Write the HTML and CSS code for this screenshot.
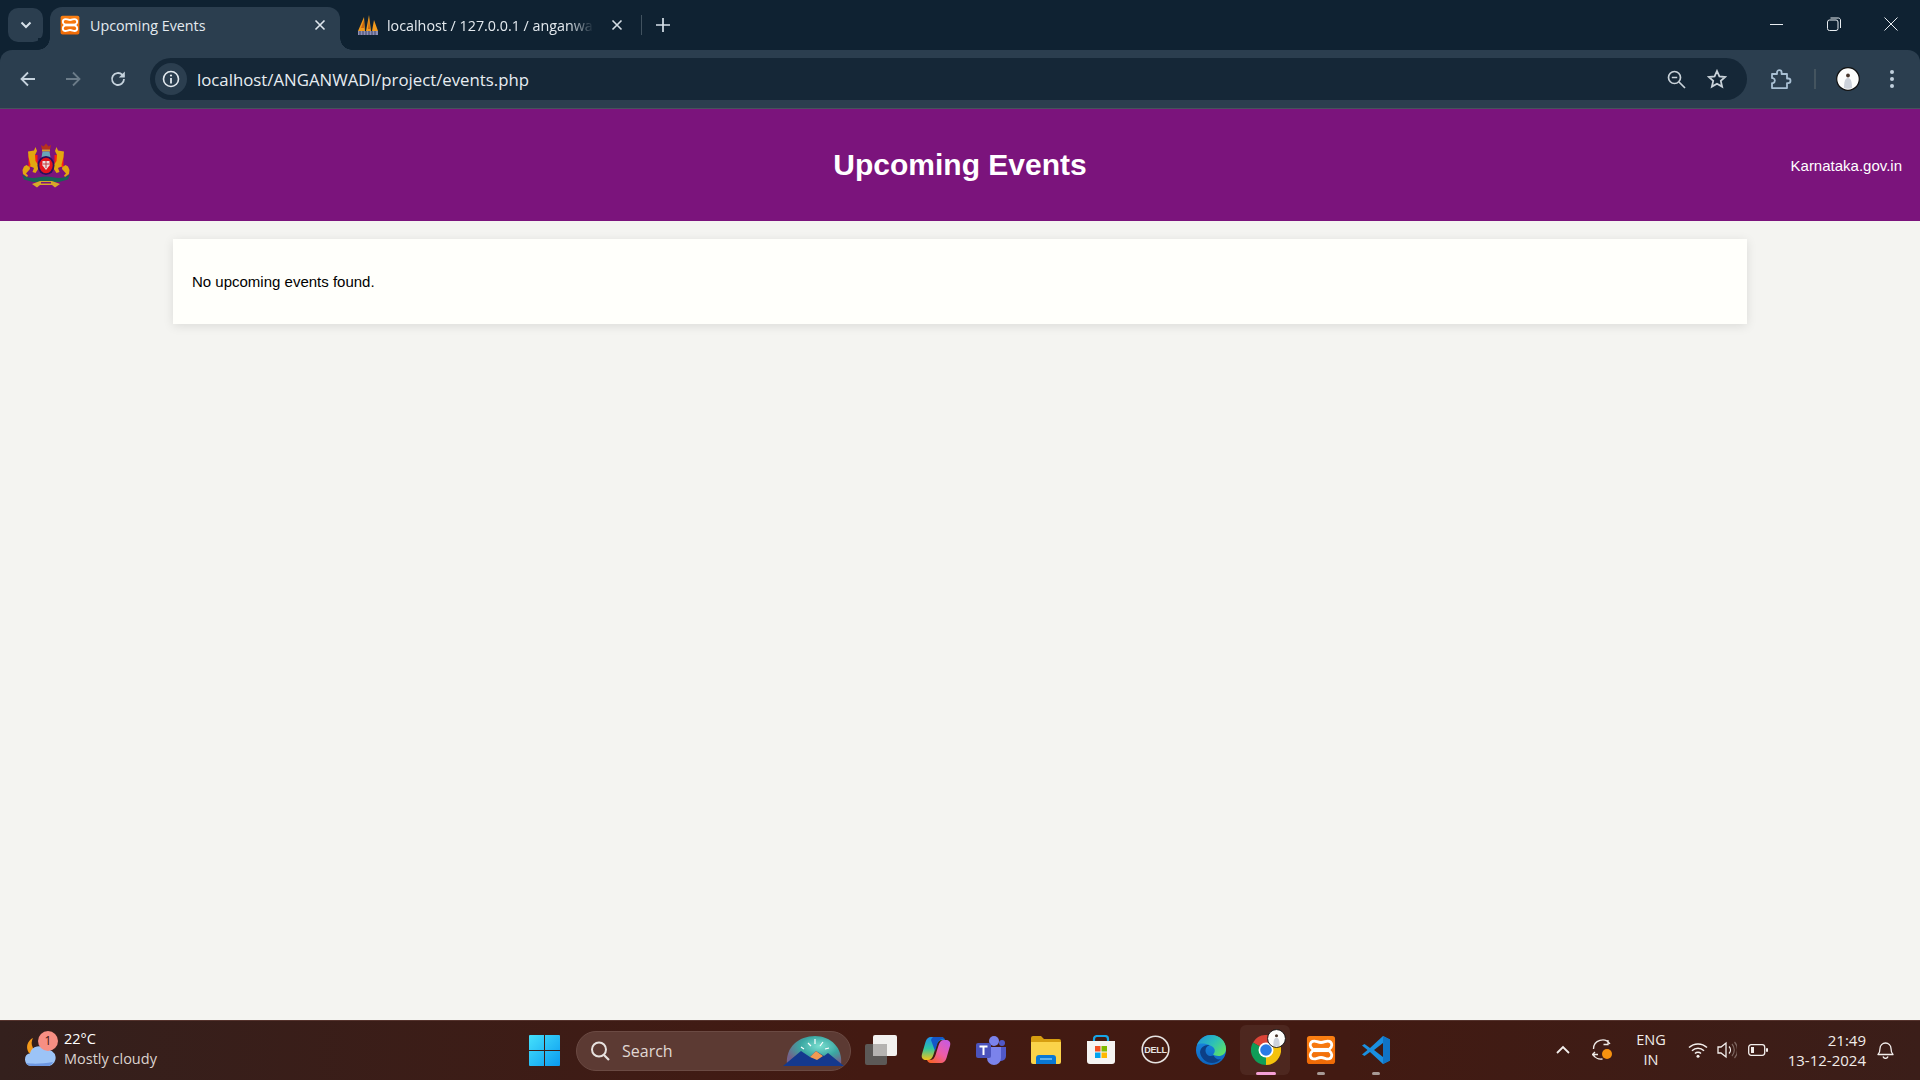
FILE: index.html
```html
<!DOCTYPE html>
<html lang="en">
<head>
<meta charset="utf-8">
<title>Upcoming Events</title>
<link rel="stylesheet" href="styles.css">
</head>
<body>
<svg class="defs" width="0" height="0" aria-hidden="true">
  <defs>
    <linearGradient id="xg" x1="0" y1="0" x2="0" y2="1"><stop offset="0" stop-color="#fb7f12"/><stop offset="1" stop-color="#ef6a06"/></linearGradient>
    <symbol id="xampp" viewBox="0 0 32 32">
      <rect x="1" y="1" width="30" height="30" rx="3" fill="url(#xg)"/>
      <path d="M9 6.500C11 6.500 13 8 16 8s5-1.500 7-1.500c3.500 0 4.500 2.500 4.500 4.500 0 2.500-3 4-3.500 5 .5 1 3.500 2.500 3.500 5 0 2-1 4.500-4.500 4.500-2 0-4-1.500-7-1.500s-5 1.500-7 1.500c-3.500 0-4.500-2.500-4.500-4.500 0-2.500 3-4 3.500-5-.5-1-3.500-2.500-3.500-5 0-2 1-4.500 4.500-4.500z" fill="none" stroke="#fff" stroke-width="3"/>
      <rect x="8" y="13.800" width="16" height="4.400" fill="#fff"/>
    </symbol>
    <symbol id="person" viewBox="0 0 24 24">
      <circle cx="12" cy="12" r="11.300" fill="#fdfdfb" stroke="#111" stroke-width="1.200"/>
      <circle cx="12" cy="8.500" r="1.900" fill="#4a372c"/>
      <path d="M8 21c0-6 1-10 4-10s4 4 4 10c-2 1-6 1-8 0z" fill="#cdd2da"/>
    </symbol>
  </defs>
</svg>

<div class="browser">
<header class="tabstrip">
  <button class="tab-menu" type="button" aria-label="Search tabs">
    <svg width="12" height="8" viewBox="0 0 12 8"><path d="M1.500 1.500 6 6l4.500-4.500" fill="none" stroke="#d7e1ea" stroke-width="2"/></svg>
  </button>
  <div class="tab tab-active">
    <svg class="favicon" width="20" height="20"><use href="#xampp"/></svg>
    <span class="tab-title">Upcoming Events</span>
    <svg class="tab-close" width="12" height="12" viewBox="0 0 12 12"><path d="M1.500 1.500l9 9m0-9l-9 9" stroke="#dfe7ee" stroke-width="1.600"/></svg>
  </div>
  <div class="tab tab-idle">
    <svg class="favicon" width="22" height="22" viewBox="0 0 22 22">
      <path d="M1 17 7 3l1 14zM9 17l3-16 2 16zM15 17l2-11 4 11z" fill="#f29b1d"/>
      <path d="M4 14 7 6v8zM11 15l1-10 1 10z" fill="#c9660f"/>
      <rect x="1" y="17" width="20" height="4" fill="#8d8fb6"/>
      <path d="M3 17v4M6 17v4M9 17v4M12 17v4M15 17v4M18 17v4" stroke="#2c3252" stroke-width=".8"/>
    </svg>
    <span class="tab-title tab-title-fade">localhost / 127.0.0.1 / anganwadi | phpMyAdmin</span>
    <svg class="tab-close" width="12" height="12" viewBox="0 0 12 12"><path d="M1.500 1.500l9 9m0-9l-9 9" stroke="#d5dde4" stroke-width="1.600"/></svg>
  </div>
  <span class="tab-sep"></span>
  <svg class="new-tab" width="14" height="14" viewBox="0 0 14 14"><path d="M7 0v14M0 7h14" stroke="#d7e1ea" stroke-width="1.700"/></svg>
  <div class="window-controls">
    <svg width="14" height="14" viewBox="0 0 14 14"><path d="M0 7.500h13" stroke="#e8edf1" stroke-width="1"/></svg>
    <svg width="14" height="14" viewBox="0 0 14 14"><rect x=".5" y="3" width="10.500" height="10.500" rx="2" fill="none" stroke="#e8edf1"/><path d="M3.500 1h8c1 0 2 1 2 2v8" fill="none" stroke="#e8edf1"/></svg>
    <svg width="14" height="14" viewBox="0 0 14 14"><path d="M.5.500l13 13m0-13l-13 13" stroke="#e8edf1" stroke-width="1"/></svg>
  </div>
</header>

<nav class="toolbar">
  <div class="nav-buttons">
    <svg width="18" height="18" viewBox="0 0 18 18"><path d="M16 9H3M9 2.500 2.500 9 9 15.500" fill="none" stroke="#c5d2dd" stroke-width="1.800"/></svg>
    <svg width="18" height="18" viewBox="0 0 18 18"><path d="M2 9h13M9 2.500 15.500 9 9 15.500" fill="none" stroke="#6c7c89" stroke-width="1.800"/></svg>
    <svg width="18" height="18" viewBox="0 0 18 18"><path d="M15 9a6 6 0 1 1-1.800-4.300L15 6.500" fill="none" stroke="#c5d2dd" stroke-width="1.800"/><path d="M15.800 1.500v6h-6z" fill="#c5d2dd"/></svg>
  </div>
  <div class="omnibox">
    <span class="site-info">
      <svg width="18" height="18" viewBox="0 0 18 18"><circle cx="9" cy="9" r="7.500" fill="none" stroke="#e3e9ee" stroke-width="1.600"/><path d="M9 8v5.500" stroke="#e3e9ee" stroke-width="1.800"/><circle cx="9" cy="5.500" r="1.100" fill="#e3e9ee"/></svg>
    </span>
    <span class="url">localhost/ANGANWADI/project/events.php</span>
    <svg class="omni-zoom" width="19" height="19" viewBox="0 0 19 19"><circle cx="7.500" cy="7.500" r="6" fill="none" stroke="#c9d2d9" stroke-width="1.700"/><path d="M4.800 7.500h5.400M12 12l6 6" stroke="#c9d2d9" stroke-width="1.700"/></svg>
    <svg class="omni-star" width="20" height="20" viewBox="0 0 20 20"><path d="M10 2l2.400 5.400 5.800.6-4.400 3.900 1.300 5.700L10 14.700l-5.100 2.900 1.300-5.700L1.800 8l5.800-.6z" fill="none" stroke="#c9d2d9" stroke-width="1.800"/></svg>
  </div>
  <svg class="puzzle" width="22" height="22" viewBox="0 0 22 22"><path d="M2 6h5V4.500a2.300 2.300 0 0 1 4.600 0V6h5.400v4.500h1.200a2.300 2.300 0 0 1 0 4.600H17v5H2v-5h1a2.600 2.600 0 0 0 0-5H2z" fill="none" stroke="#a9c0d4" stroke-width="1.800" stroke-linejoin="round"/></svg>
  <span class="toolbar-sep"></span>
  <svg class="avatar" width="24" height="24"><use href="#person"/></svg>
  <svg class="kebab" width="6" height="20" viewBox="0 0 6 20"><circle cx="3" cy="3" r="2" fill="#c1d0dd"/><circle cx="3" cy="10" r="2" fill="#c1d0dd"/><circle cx="3" cy="17" r="2" fill="#c1d0dd"/></svg>
</nav>
</div>

<section class="site-header">
  <svg class="emblem" width="50" height="46" viewBox="0 0 50 46" role="img" aria-label="Karnataka emblem">
    <path d="M21 6.500 20 2l2.500 1.500L25 .5l2.500 3L30 2l-1 4.500z" fill="#b8321c"/>
    <rect x="21" y="6.500" width="8" height="2" fill="#d99a2b"/>
    <path d="M21.500 8.500h7l1 6h-9z" fill="#69a7b8"/>
    <rect x="7.500" y="12" width="9" height="12" fill="#ff1f0f"/>
    <rect x="33.500" y="12" width="9" height="12" fill="#ff1f0f"/>
    <path d="M7 8.500l6-1 1.500-3.500 1.500 4-2 4 .5 6 4 6-4 6-3-1 1.500-4-4.500-2 .5 3-4 4.500 2 2-1 1.500-4-3-.5-4 1.500-3.500 2.500-1.500 3 2 1-2-2-8z" fill="#e2a70f"/>
    <path d="M43 8.500l-6-1L35.500 4 34 8l2 4-.5 6-4 6 4 6 3-1-1.500-4 4.500-2-.5 3 4 4.500-2 2 1 1.500 4-3 .5-4-1.500-3.500-2.500-1.500-3 2-1-2 2-8z" fill="#e2a70f"/>
    <ellipse cx="25" cy="22.500" rx="8.500" ry="9.500" fill="#2a0f5e"/>
    <ellipse cx="25" cy="22.500" rx="6.700" ry="7.800" fill="#e4141c"/>
    <path d="M21.500 18h7v4.500L25 27l-3.500-4.500z" fill="#e9dfe0"/>
    <path d="M25 18v7M22 21h6" stroke="#c23a3f" stroke-width="1"/>
    <path d="M1 31.500c3 2.500 7 3.500 11 3.500 4 0 8-1.500 13-1.500s9 1.500 13 1.500c4 0 8-1 11-3.500l-2 5-9 2.500H12l-9-2.500z" fill="#176355"/>
    <path d="M11 41l8-3h12l8 3-5 3.500-3-2.500H19l-3 2.500z" fill="#d7a928"/>
    <path d="M20 39h10v1.500H20z" fill="#7b147c"/>
  </svg>
  <h1 class="site-title">Upcoming Events</h1>
  <a class="site-link">Karnataka.gov.in</a>
</section>

<main class="content">
  <div class="card">
    <p class="empty">No upcoming events found.</p>
  </div>
</main>

<footer class="taskbar">
  <div class="tb-left">
    <div class="weather">
      <span class="weather-icon">
        <svg width="32" height="34" viewBox="0 0 32 34">
          <path d="M9 4a10 10 0 0 0 8 15H5A10 10 0 0 1 9 4z" fill="#f49a1a"/>
          <path d="M7 32a6.500 6.500 0 0 1-1-12.800A9 9 0 0 1 22 16a7 7 0 0 1 3 16z" fill="#9cc4f7"/>
          <path d="M7 32a6.500 6.500 0 0 1-5-3c6 1 16 1 27-1a7 7 0 0 1-4 4z" fill="#6e98e2"/>
        </svg>
        <span class="weather-badge">1</span>
      </span>
      <span class="weather-text">
        <span class="weather-temp">22°C</span>
        <span class="weather-desc">Mostly cloudy</span>
      </span>
    </div>
  </div>

  <svg class="win-logo" width="31" height="31" viewBox="0 0 31 31">
    <defs><linearGradient id="wing" x1="0" y1="0" x2="1" y2="1"><stop offset="0" stop-color="#45e1fb"/><stop offset="1" stop-color="#0a9af0"/></linearGradient></defs>
    <path d="M0 1a1 1 0 0 1 1-1h14v15H0zM16 0h14a1 1 0 0 1 1 1v14H16zM0 16h15v15H1a1 1 0 0 1-1-1zM16 16h15v14a1 1 0 0 1-1 1H16z" fill="url(#wing)"/>
  </svg>

  <div class="search">
    <svg width="22" height="22" viewBox="0 0 22 22"><circle cx="10" cy="9.500" r="7" fill="none" stroke="#e7e2df" stroke-width="2"/><path d="M15 15l5 5" stroke="#e7e2df" stroke-width="2.200"/></svg>
    <span class="search-label">Search</span>
    <svg class="search-art" width="62" height="32" viewBox="0 0 62 32">
      <defs><radialGradient id="sky" cx=".6" cy=".35" r=".65"><stop offset="0" stop-color="#7adfd0"/><stop offset=".55" stop-color="#3aa7a2"/><stop offset="1" stop-color="#74628a"/></radialGradient></defs>
      <path d="M4 30C2 12 16 1 32 1s28 12 26 29z" fill="url(#sky)"/>
      <path d="M0 31l18-15 9 6 6-6 8 5 4-3 16 13z" fill="#14398e"/>
      <path d="M27 22l6-6 7 5-6 4z" fill="#f09a52"/>
      <path d="M25 8l3 3M32 4v5M40 7l-3 4M18 12l3 2M46 13l-4 1" stroke="#fff" stroke-width="1.200"/>
    </svg>
  </div>

  <div class="apps">
    <span class="app">
      <svg width="32" height="30" viewBox="0 0 32 30"><rect x="0" y="9" width="22" height="21" rx="2" fill="#5c5957"/><rect x="8" y="0" width="24" height="21" rx="2" fill="#f2f1ef"/><rect x="8" y="9" width="14" height="12" fill="#b5b3b1"/></svg>
    </span>
    <span class="app">
      <svg width="30" height="30" viewBox="0 0 30 30">
        <defs>
          <linearGradient id="cop1" x1=".3" y1="0" x2=".3" y2="1"><stop offset="0" stop-color="#1f8fee"/><stop offset=".5" stop-color="#2fc6a0"/><stop offset="1" stop-color="#f5c518"/></linearGradient>
          <linearGradient id="cop2" x1="1" y1="0" x2=".2" y2="1"><stop offset="0" stop-color="#c05ae8"/><stop offset=".55" stop-color="#ee5da8"/><stop offset="1" stop-color="#f8622a"/></linearGradient>
        </defs>
        <path d="M10 2h10c2.500 0 3.500 1.500 4 3h-3c-3 0-4.500 2-5.500 5l-3 9.500C11.500 23 10 25 7 25H5c-3.500 0-5-2.500-4-6l3.500-12C5.500 3.500 7.500 2 10 2z" fill="url(#cop1)"/>
        <path d="M10 5c.5-1.500 1-2 2-3h8c2.500 0 3.500 1.500 4 3-2-1-4-1-5 0-1.500.5-2.500 2.500-3 5l-2 6z" fill="#1456c8"/>
        <path d="M20 28H10c-2.500 0-3.500-1.500-4-3h3c3 0 4.500-2 5.500-5l3-9.500C18.500 7 20 5 23 5h2c3.500 0 5 2.500 4 6l-3.500 12C24.500 26.500 22.500 28 20 28z" fill="url(#cop2)"/>
      </svg>
    </span>
    <span class="app">
      <svg width="30" height="30" viewBox="0 0 30 30">
        <circle cx="18" cy="6" r="5" fill="#7b83eb"/><circle cx="26" cy="8" r="3" fill="#5059c9"/>
        <path d="M21 12h9v9a5 5 0 0 1-5 5h-4z" fill="#5059c9"/>
        <path d="M11 12h14v11a7 7 0 0 1-14 0z" fill="#7b83eb"/>
        <rect x="0" y="8" width="15" height="15" rx="2" fill="#4b53bc"/>
        <path d="M3.500 11.500h8M7.500 11.500v8.500" stroke="#fff" stroke-width="2"/>
      </svg>
    </span>
    <span class="app">
      <svg width="30" height="28" viewBox="0 0 30 28">
        <path d="M0 2a2 2 0 0 1 2-2h8l3 3h15a2 2 0 0 1 2 2v3H0z" fill="#d79e10"/>
        <path d="M0 6h30v20a2 2 0 0 1-2 2H2a2 2 0 0 1-2-2z" fill="#fbd34a"/>
        <path d="M5 28v-6a3 3 0 0 1 3-3h14a3 3 0 0 1 3 3v6z" fill="#0a78d4"/>
        <path d="M9 23h12" stroke="#7cc4f5" stroke-width="1.500"/>
      </svg>
    </span>
    <span class="app">
      <svg width="30" height="30" viewBox="0 0 30 30">
        <path d="M8 8V4a3 3 0 0 1 3-3h8a3 3 0 0 1 3 3v4" fill="none" stroke="#17a5e6" stroke-width="2.200"/>
        <path d="M1 6h28v20a3 3 0 0 1-3 3H4a3 3 0 0 1-3-3z" fill="#f5f4f2"/>
        <rect x="9" y="11" width="5.500" height="5.500" fill="#f25022"/><rect x="15.500" y="11" width="5.500" height="5.500" fill="#7fba00"/>
        <rect x="9" y="17.500" width="5.500" height="5.500" fill="#00a4ef"/><rect x="15.500" y="17.500" width="5.500" height="5.500" fill="#ffb900"/>
      </svg>
    </span>
    <span class="app">
      <svg width="29" height="29" viewBox="0 0 29 29">
        <circle cx="14.500" cy="14.500" r="13.300" fill="none" stroke="#e6e3e1" stroke-width="1.600"/>
        <text class="dell-text" x="14.500" y="17.800" text-anchor="middle">DELL</text>
      </svg>
    </span>
    <span class="app">
      <svg width="30" height="30" viewBox="0 0 30 30">
        <defs>
          <linearGradient id="edge1" x1="0" y1="0" x2="1" y2=".7"><stop offset="0" stop-color="#1d8fe0"/><stop offset=".55" stop-color="#2cc0b8"/><stop offset="1" stop-color="#5ae06a"/></linearGradient>
          <linearGradient id="edge2" x1="0" y1="0" x2="0" y2="1"><stop offset="0" stop-color="#1b8ee6"/><stop offset="1" stop-color="#0c63bd"/></linearGradient>
        </defs>
        <circle cx="15" cy="15" r="15" fill="url(#edge2)"/>
        <path d="M1 10C4 3 10 0 15 0c8.500 0 15 6 15 14 0 4.500-3.500 7-7.500 7-2.500 0-4.500-.7-5.500-1.700 2-1.500 2.500-4.500.5-6.800C14.500 9.500 5 6.500 1 10z" fill="url(#edge1)"/>
        <path d="M17.500 20.500c-4 1.500-8-.5-8-5 0-2.500 1.500-4.500 4-5.300-5-.7-9 2.600-9.500 7 .8 6 6.500 10.800 12 10.800 3.500 0 6.500-1.500 9-4-2.500 1-5.500.2-7.500-3.500z" fill="#0c3f86"/>
      </svg>
    </span>
    <span class="app app-active">
      <span class="chrome-wrap">
        <svg width="30" height="30" viewBox="0 0 30 30">
          <path d="M15 15 2 7.500A15 15 0 0 1 28 7.500z" fill="#db4437"/>
          <path d="M15 15l13-7.500A15 15 0 0 1 15 30z" fill="#f4c20d"/>
          <path d="M15 15v15A15 15 0 0 1 2 7.500z" fill="#0f9d58"/>
          <circle cx="15" cy="15" r="7.500" fill="#fff"/><circle cx="15" cy="15" r="5.800" fill="#2a7be4"/>
        </svg>
        <svg class="chrome-badge" width="19" height="19"><use href="#person"/></svg>
      </span>
      <span class="indicator indicator-pink"></span>
    </span>
    <span class="app">
      <svg width="30" height="30"><use href="#xampp"/></svg>
      <span class="indicator"></span>
    </span>
    <span class="app">
      <svg width="30" height="30" viewBox="0 0 30 30">
        <path d="M22 1l7 3.500v21L22 29 9 17l-5.500 4L1 19.500 6.500 15 1 10.500 3.500 9 9 13z" fill="#1a8fe0"/>
        <path d="M22 8v14l-9-7z" fill="#401a12"/>
        <path d="M22 1l7 3.500v21L22 29z" fill="#0f74c6"/>
      </svg>
      <span class="indicator"></span>
    </span>
  </div>

  <div class="tray">
    <span class="tray-slot tray-chevron"><svg width="14" height="9" viewBox="0 0 14 9"><path d="M1 8l6-6 6 6" fill="none" stroke="#f3eeec" stroke-width="1.800"/></svg></span>
    <span class="tray-slot tray-sync">
      <svg width="22" height="22" viewBox="0 0 22 22"><path d="M1.500 10A9 9 0 0 1 18 5M16 1v4.500h-4.500" fill="none" stroke="#efeae7" stroke-width="1.300"/><path d="M3 13l-2.500 2.500L3 18M1 15.500h5M1.500 16a9 9 0 0 0 9 4" fill="none" stroke="#efeae7" stroke-width="1.300"/><circle cx="15" cy="15" r="5" fill="#f7920f"/></svg>
    </span>
    <span class="tray-lang"><span>ENG</span><span>IN</span></span>
    <span class="tray-slot tray-wifi"><svg width="20" height="16" viewBox="0 0 20 16"><path d="M1 5.500a13 13 0 0 1 18 0M4 8.700a8.500 8.500 0 0 1 12 0M7 11.500a4.200 4.200 0 0 1 6 0" fill="none" stroke="#f3eeec" stroke-width="1.500"/><circle cx="10" cy="14.300" r="1.500" fill="#f3eeec"/></svg></span>
    <span class="tray-slot tray-sound"><svg width="20" height="18" viewBox="0 0 20 18"><path d="M1 6h3l5-4v14l-5-4H1z" fill="none" stroke="#f3eeec" stroke-width="1.300"/><path d="M12 5.500a5 5 0 0 1 0 7" fill="none" stroke="#f3eeec" stroke-width="1.300"/><path d="M15 3a9 9 0 0 1 0 12M17.500 1a12 12 0 0 1 0 16" fill="none" stroke="#7d6660" stroke-width="1.200"/></svg></span>
    <span class="tray-slot tray-battery"><svg width="20" height="12" viewBox="0 0 20 12"><rect x=".7" y=".7" width="16" height="10.600" rx="2.500" fill="none" stroke="#f3eeec" stroke-width="1.300"/><rect x="3" y="3" width="3" height="6" fill="#f3eeec"/><rect x="18" y="4" width="2" height="4" rx="1" fill="#f3eeec"/></svg></span>
    <span class="tray-clock"><span>21:49</span><span>13-12-2024</span></span>
    <span class="tray-slot tray-bell"><svg width="17" height="18" viewBox="0 0 17 18"><path d="M1 13.500c1.500-1.500 2-3 2-6a5.500 5.500 0 0 1 11 0c0 3 .5 4.500 2 6z" fill="none" stroke="#f3eeec" stroke-width="1.300" stroke-linejoin="round"/><path d="M6 15.500a2.600 2.600 0 0 0 5 0" fill="none" stroke="#f3eeec" stroke-width="1.300"/></svg></span>
  </div>
</footer>
</body>
</html>
```

FILE: styles.css
```css
* { box-sizing: border-box; }

html, body { height: 100%; }

body {
  margin: 0;
  display: flex;
  flex-direction: column;
  height: 1080px;
  overflow: hidden;
  background: #f4f4f1;
  font-family: "Liberation Sans", Arial, sans-serif;
}

.defs { position: absolute; }

.browser {
  flex: 0 0 109px;
  display: flex;
  flex-direction: column;
  background: #0f2232;
}

/* Browser tab strip */
.tabstrip {
  flex: 0 0 50px;
  display: flex;
  align-items: flex-end;
  padding-left: 8px;
  font-family: "Open Sans", sans-serif;
  font-size: 14.300px;
  color: #e4eaef;
}

.tab-menu {
  flex: 0 0 35px;
  height: 34px;
  margin-bottom: 8px;
  padding: 0;
  border: 0;
  border-radius: 10px;
  background: #2b3e4f;
  display: flex;
  align-items: center;
  justify-content: center;
}

.tab {
  display: flex;
  align-items: center;
  height: 43px;
  padding-bottom: 7px;
}

.tab-active {
  position: relative;
  width: 290px;
  margin-left: 7px;
  padding-left: 10px;
  background: #2b3e4f;
  border-radius: 12px 12px 0 0;
}

.tab-active::before,
.tab-active::after {
  content: "";
  position: absolute;
  bottom: 0;
  width: 12px;
  height: 12px;
}

.tab-active::before {
  left: -12px;
  background: radial-gradient(circle at 0 0, #0f2232 11.500px, #2b3e4f 12px);
}

.tab-active::after {
  right: -12px;
  background: radial-gradient(circle at 100% 0, #0f2232 11.500px, #2b3e4f 12px);
}

.tab-idle {
  width: 301px;
  padding-left: 17px;
}

.tab-title {
  margin-left: 10px;
  white-space: nowrap;
  overflow: hidden;
}

.tab-active .tab-title { width: 224px; }

.tab-title-fade {
  width: 211px;
  margin-left: 8px;
  -webkit-mask-image: linear-gradient(to right, #000 86%, transparent 98%);
  mask-image: linear-gradient(to right, #000 86%, transparent 98%);
}

.tab-idle .tab-close { margin-left: 13px; }

.tab-sep {
  width: 1px;
  height: 20px;
  margin: 0 0 15px 0;
  background: #41525f;
}

.new-tab { margin: 0 0 18px 14px; }

.window-controls {
  margin-left: auto;
  display: flex;
  align-items: center;
  height: 50px;
  padding-bottom: 2px;
  padding-right: 22px;
  gap: 43px;
}

/* Browser toolbar */
.toolbar {
  flex: 0 0 59px;
  display: flex;
  align-items: center;
  background: #2b3e4f;
  border-radius: 12px 12px 0 0;
  border-bottom: 1px solid #46535d;
  padding: 0 0 0 19px;
}

.nav-buttons {
  display: flex;
  align-items: center;
  gap: 27px;
  width: 131px;
}

.omnibox {
  width: 1597px;
  height: 42px;
  display: flex;
  align-items: center;
  border-radius: 21px;
  background: #152737;
  padding: 0 15px 0 5px;
}

.site-info {
  flex: 0 0 32px;
  height: 32px;
  border-radius: 50%;
  background: #2b3e4f;
  display: flex;
  align-items: center;
  justify-content: center;
}

.url {
  margin-left: 10px;
  font-family: "Open Sans", sans-serif;
  font-size: 16.800px;
  color: #e7edf2;
  flex: 1;
}

.omni-star { margin-left: 21px; margin-right: 5px; }

.puzzle { margin-left: 23px; }

.toolbar-sep {
  width: 2px;
  height: 20px;
  margin-left: 22px;
  background: #44545f;
}

.avatar { margin-left: 20px; }

.kebab { margin-left: 29px; }

/* Page header */
.site-header {
  flex: 0 0 112px;
  display: flex;
  align-items: center;
  justify-content: space-between;
  position: relative;
  background: #7b147c;
  padding: 0 18px 0 21px;
  color: #fff;
}

.emblem { margin-top: 1px; }

.site-title {
  position: absolute;
  left: 0;
  right: 0;
  margin: 0;
  text-align: center;
  font-size: 30px;
  font-weight: 700;
}

.site-link {
  font-size: 15px;
  color: #fff;
}

/* Page content */
.content {
  flex: 1;
  padding: 18px 173px 0;
  min-height: 0;
}

.card {
  height: 85px;
  padding: 0 19px;
  display: flex;
  align-items: center;
  background: #fffffb;
  box-shadow: 0 2px 10px rgba(0, 0, 0, .1);
}

.empty {
  margin: 0;
  font-size: 15px;
  color: #000;
}

/* Windows taskbar */
.taskbar {
  flex: 0 0 60px;
  display: flex;
  align-items: center;
  background: linear-gradient(to right, #34201d 0%, #431a12 45%, #421a12 70%, #3b1e19 100%);
  border-top: 1px solid #55332d;
  font-family: "Open Sans", sans-serif;
  color: #f1ece9;
}

.tb-left {
  flex: 0 0 529px;
  padding-left: 24px;
}

.weather {
  display: flex;
  align-items: center;
  gap: 8px;
}

.weather-icon {
  position: relative;
  width: 32px;
  height: 34px;
}

.weather-badge {
  position: absolute;
  top: -3px;
  left: 14px;
  width: 20px;
  height: 20px;
  border-radius: 50%;
  background: #f78f83;
  color: #3b1510;
  font-size: 12px;
  line-height: 20px;
  text-align: center;
}

.weather-text {
  display: flex;
  flex-direction: column;
  font-size: 14.500px;
  line-height: 20px;
  margin-top: -3px;
}

.weather-temp { color: #fff; }
.weather-desc { color: #dcd3cf; }

.win-logo { flex: 0 0 31px; }

.search {
  flex: 0 0 275px;
  height: 40px;
  margin-left: 16px;
  display: flex;
  align-items: center;
  padding-left: 12px;
  border-radius: 20px;
  background: #5c3a33;
  border: 1px solid #6b4a43;
}

.search-label {
  margin-left: 11px;
  font-size: 16px;
  color: #e0d8d4;
}

.search-art { margin-left: auto; margin-right: 5px; }

.apps {
  display: flex;
  margin-left: 2px;
  height: 59px;
}

.app {
  position: relative;
  flex: 0 0 55px;
  display: flex;
  align-items: center;
  justify-content: center;
  padding-bottom: 2px;
}

.app-active::before {
  content: "";
  position: absolute;
  left: 2px;
  right: 3px;
  top: 4px;
  bottom: 5px;
  border-radius: 6px;
  background: rgba(255, 255, 255, .06);
}

.chrome-wrap {
  position: relative;
  display: flex;
}

.chrome-badge {
  position: absolute;
  top: -6px;
  right: -5px;
}

.dell-text {
  font-family: "Liberation Sans", sans-serif;
  font-size: 9px;
  font-weight: 700;
  fill: #e6e3e1;
  letter-spacing: -.3px;
}

.indicator {
  position: absolute;
  bottom: 5px;
  left: 24px;
  width: 8px;
  height: 3px;
  border-radius: 2px;
  background: #a79a96;
}

.indicator-pink {
  left: 18px;
  width: 20px;
  background: #f5a0d6;
}

.tray {
  margin-left: auto;
  display: flex;
  align-items: center;
  padding-right: 16px;
  padding-bottom: 2px;
  height: 59px;
}

.tray-slot {
  display: flex;
  align-items: center;
  justify-content: center;
}

.tray-chevron { width: 30px; }
.tray-sync { width: 50px; }

.tray-lang {
  width: 46px;
  display: flex;
  flex-direction: column;
  align-items: center;
  font-size: 14.500px;
  line-height: 20px;
}

.tray-wifi { width: 30px; margin-left: 9px; }
.tray-sound { width: 28px; }
.tray-battery { width: 34px; }

.tray-clock {
  width: 91px;
  display: flex;
  flex-direction: column;
  align-items: flex-end;
  font-size: 15px;
  line-height: 20px;
}

.tray-bell { width: 38px; }
```
